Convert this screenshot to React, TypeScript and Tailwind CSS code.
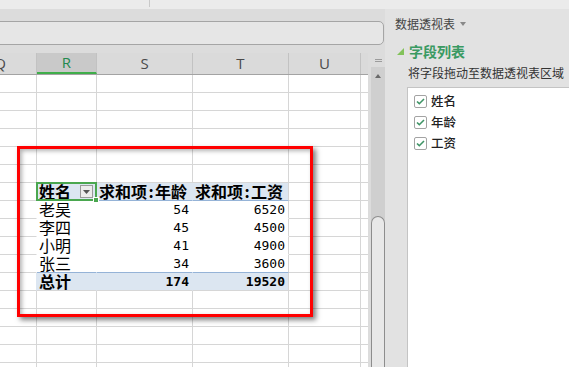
import React from 'react';

// Spreadsheet with pivot table + pivot field panel

const cjk = "font-['Noto_Sans_CJK_SC',sans-serif]";
const mono = "font-['DejaVu_Sans_Mono',monospace]";

const headers = [
  { l: 'Q', cls: 'w-[73px] -ml-[36px]' },
  { l: 'R', cls: 'w-[60px]', active: true },
  { l: 'S', cls: 'w-[96px]' },
  { l: 'T', cls: 'w-[96px]' },
  { l: 'U', cls: 'w-[72px]' },
  { l: '', cls: 'w-[40px]' },
];

const people = [
  { name: '老吴', age: 54, pay: 6520 },
  { name: '李四', age: 45, pay: 4500 },
  { name: '小明', age: 41, pay: 4900 },
  { name: '张三', age: 34, pay: 3600 },
];

function Colon() {
  return <span className="inline-block w-[8px] text-center">:</span>;
}

function EmptyRow() {
  return (
    <div className="flex h-[18px] shrink-0">
      <div className="w-[73px] -ml-[36px] shrink-0 border-r border-b border-[#d6d6d6]" />
      <div className="w-[60px] shrink-0 border-r border-b border-[#d6d6d6]" />
      <div className="w-[96px] shrink-0 border-r border-b border-[#d6d6d6]" />
      <div className="w-[96px] shrink-0 border-r border-b border-[#d6d6d6]" />
      <div className="w-[72px] shrink-0 border-r border-b border-[#d6d6d6]" />
      <div className="w-[40px] shrink-0 border-b border-[#d6d6d6]" />
    </div>
  );
}

function Tail() {
  return (
    <>
      <div className="w-[72px] shrink-0 border-r border-b border-[#d6d6d6]" />
      <div className="w-[40px] shrink-0 border-b border-[#d6d6d6]" />
    </>
  );
}

function PivotHeader() {
  return (
    <div className={`flex h-[18px] shrink-0 text-[16px] leading-[17px] font-bold text-black ${cjk}`}>
      <div className="w-[73px] -ml-[36px] shrink-0 border-r border-b border-[#d6d6d6]" />
      <div className="relative w-[60px] shrink-0 border-r border-b border-r-[#dce6f1] border-b-[#95b3d7] bg-[#dce6f1] pl-[2px]">
        姓名
        <div className="absolute left-[43px] top-[2px] flex h-[13px] w-[13px] items-center justify-center border border-[#9a9a9a] bg-[#ececec]">
          <svg width="7" height="4" viewBox="0 0 7 4">
            <path d="M0 0h7L3.5 4z" fill="#555" />
          </svg>
        </div>
        <div className="absolute -inset-[1px] z-10 border-2 border-[#4aa74f]">
          <div className="absolute -right-[4px] -bottom-[4px] h-[6px] w-[6px] border border-white bg-[#4aa74f]" />
        </div>
      </div>
      <div className="w-[96px] shrink-0 border-r border-b border-r-[#dce6f1] border-b-[#95b3d7] bg-[#dce6f1] pl-[2px] whitespace-nowrap">
        求和项<Colon />年龄
      </div>
      <div className="w-[96px] shrink-0 border-r border-b border-r-[#d6d6d6] border-b-[#95b3d7] bg-[#dce6f1] pl-[2px] whitespace-nowrap">
        求和项<Colon />工资
      </div>
      <Tail />
    </div>
  );
}

function PivotRow({ p, last }: { p: (typeof people)[number]; last: boolean }) {
  const b = last ? 'border-b-[#95b3d7]' : 'border-b-white';
  return (
    <div className="flex h-[18px] shrink-0 text-black">
      <div className="w-[73px] -ml-[36px] shrink-0 border-r border-b border-r-white border-b-[#d6d6d6]" />
      <div className={`w-[60px] shrink-0 border-r border-b border-r-white ${b} pl-[2px] text-[16px] leading-[17px] ${cjk}`}>
        {p.name}
      </div>
      <div className={`w-[96px] shrink-0 border-r border-b border-r-white ${b} pr-[3px] text-right text-[13px] leading-[18px] ${mono}`}>
        {p.age}
      </div>
      <div className={`w-[96px] shrink-0 border-r border-b border-r-[#d6d6d6] ${b} pr-[3px] text-right text-[13px] leading-[18px] ${mono}`}>
        {p.pay}
      </div>
      <Tail />
    </div>
  );
}

function PivotTotal() {
  return (
    <div className="flex h-[18px] shrink-0 font-bold text-black">
      <div className="w-[73px] -ml-[36px] shrink-0 border-r border-b border-r-[#dce6f1] border-b-[#d6d6d6]" />
      <div className={`w-[60px] shrink-0 border-r border-b border-r-[#dce6f1] border-b-[#d6d6d6] bg-[#dce6f1] pl-[2px] text-[16px] leading-[17px] ${cjk}`}>
        总计
      </div>
      <div className={`w-[96px] shrink-0 border-r border-b border-r-[#dce6f1] border-b-[#d6d6d6] bg-[#dce6f1] pr-[3px] text-right text-[13px] leading-[18px] ${mono}`}>
        174
      </div>
      <div className={`w-[96px] shrink-0 border-r border-b border-r-[#d6d6d6] border-b-[#d6d6d6] bg-[#dce6f1] pr-[3px] text-right text-[13px] leading-[18px] ${mono}`}>
        19520
      </div>
      <Tail />
    </div>
  );
}

function Check({ label }: { label: string }) {
  return (
    <div className="flex h-[21px] items-center gap-[4px] pl-[6px]">
      <div className="flex h-[13px] w-[13px] items-center justify-center rounded-[2px] border border-[#a3a3a3] bg-white">
        <svg width="9" height="7" viewBox="0 0 9 7">
          <path d="M1 3.5l2.3 2.2L8 1" fill="none" stroke="#3f9466" strokeWidth="1.6" />
        </svg>
      </div>
      <span className={`text-[12.5px] font-medium text-[#222] ${cjk}`}>{label}</span>
    </div>
  );
}

export default function App() {
  return (
    <div className="flex h-[367px] w-[569px] flex-col overflow-hidden bg-[#dcdcdc] select-none">
      {/* top strip */}
      <div className="flex h-[9px] shrink-0 bg-[#ebebeb]">
        <div className="w-[150px] h-[7px] border-r border-[#c9c9c9]" />
      </div>

      <div className="flex min-h-0 flex-1">
        {/* sheet side */}
        <div className="flex w-[385px] shrink-0 flex-col">
          <div className="h-[12px] shrink-0" />
          <div className="-ml-[10px] h-[24px] w-[394px] shrink-0 rounded-r-[5px] border border-[#a5a5a5] bg-[#e6e6e6]" />
          <div className="h-[8px] shrink-0" />

          <div className="flex min-h-0 flex-1">
            {/* grid */}
            <div className="relative flex w-[368px] shrink-0 flex-col overflow-hidden">
              <div className="flex h-[22px] shrink-0 border-b border-[#a3a3a3] bg-[#dadada] font-['Open_Sans',sans-serif] text-[15px] text-[#4a4a4a]">
                {headers.map((h) => (
                  <div
                    key={h.l + h.cls}
                    className={`${h.cls} flex shrink-0 items-center justify-center border-r border-[#c2c2c2] ${
                      h.active ? 'border-b-2 border-b-[#3fae4a] bg-[#c9c9c9] text-[#238a4f]' : ''
                    }`}
                  >
                    {h.l}
                  </div>
                ))}
              </div>
              <div className="flex flex-1 flex-col bg-white">
                {[0, 1, 2, 3, 4, 5].map((i) => (
                  <EmptyRow key={i} />
                ))}
                <PivotHeader />
                {people.map((p, i) => (
                  <PivotRow key={p.name} p={p} last={i === people.length - 1} />
                ))}
                <PivotTotal />
                {[0, 1, 2, 3, 4, 5].map((i) => (
                  <EmptyRow key={'e' + i} />
                ))}
              </div>

              {/* red annotation rectangle */}
              <div className="pointer-events-none absolute left-[17px] top-[93px] h-[171px] w-[296px] border-[3px] border-[#ff0000] shadow-[3px_3px_5px_rgba(0,0,0,0.5),inset_2px_2px_4px_rgba(0,0,0,0.3)]" />
            </div>

            {/* vertical scrollbar */}
            <div className="flex w-[17px] shrink-0 flex-col">
              <div className="flex h-[14px] shrink-0 flex-col items-center justify-center gap-[1px] pl-[3px]">
                <div className="h-px w-[7px] bg-[#9c9c9c]" />
                <div className="h-px w-[7px] bg-[#9c9c9c]" />
              </div>
              <div className="ml-[3px] flex flex-1 flex-col bg-[#cfcfcf]">
                <div className="flex h-[18px] items-center justify-center">
                  <svg width="6" height="4" viewBox="0 0 6 4">
                    <path d="M3 0l3 4H0z" fill="#6a6a6a" />
                  </svg>
                </div>
                <div className="h-[131px]" />
                <div className="flex-1 rounded-t-[7px] border border-b-0 border-[#8d8d8d] bg-[#e8e8e8]" />
              </div>
            </div>
          </div>
        </div>

        {/* pivot field panel */}
        <div className={`flex flex-1 flex-col bg-[#e2e2e2] ${cjk}`}>
          <div className="flex h-[30px] items-center gap-[5px] pl-[10px] text-[12px] text-[#444]">
            数据透视表
            <svg width="6" height="4" viewBox="0 0 6 4">
              <path d="M0 0h6L3 4z" fill="#888" />
            </svg>
          </div>
          <div className="flex h-[24px] items-center gap-[5px] pl-[12px]">
            <svg width="7" height="7" viewBox="0 0 7 7">
              <path d="M7 0v7H0z" fill="#82c25a" />
            </svg>
            <span className="text-[14px] font-bold text-[#3a9a62]">字段列表</span>
          </div>
          <div className="flex h-[20px] items-center pl-[23px] text-[12px] whitespace-nowrap text-[#333]">
            将字段拖动至数据透视表区域
          </div>
          <div className="mt-[4px] ml-[22px] flex flex-1 flex-col border border-r-0 border-b-0 border-[#c4c4c4] bg-white pt-[3px]">
            <Check label="姓名" />
            <Check label="年龄" />
            <Check label="工资" />
          </div>
        </div>
      </div>
    </div>
  );
}
